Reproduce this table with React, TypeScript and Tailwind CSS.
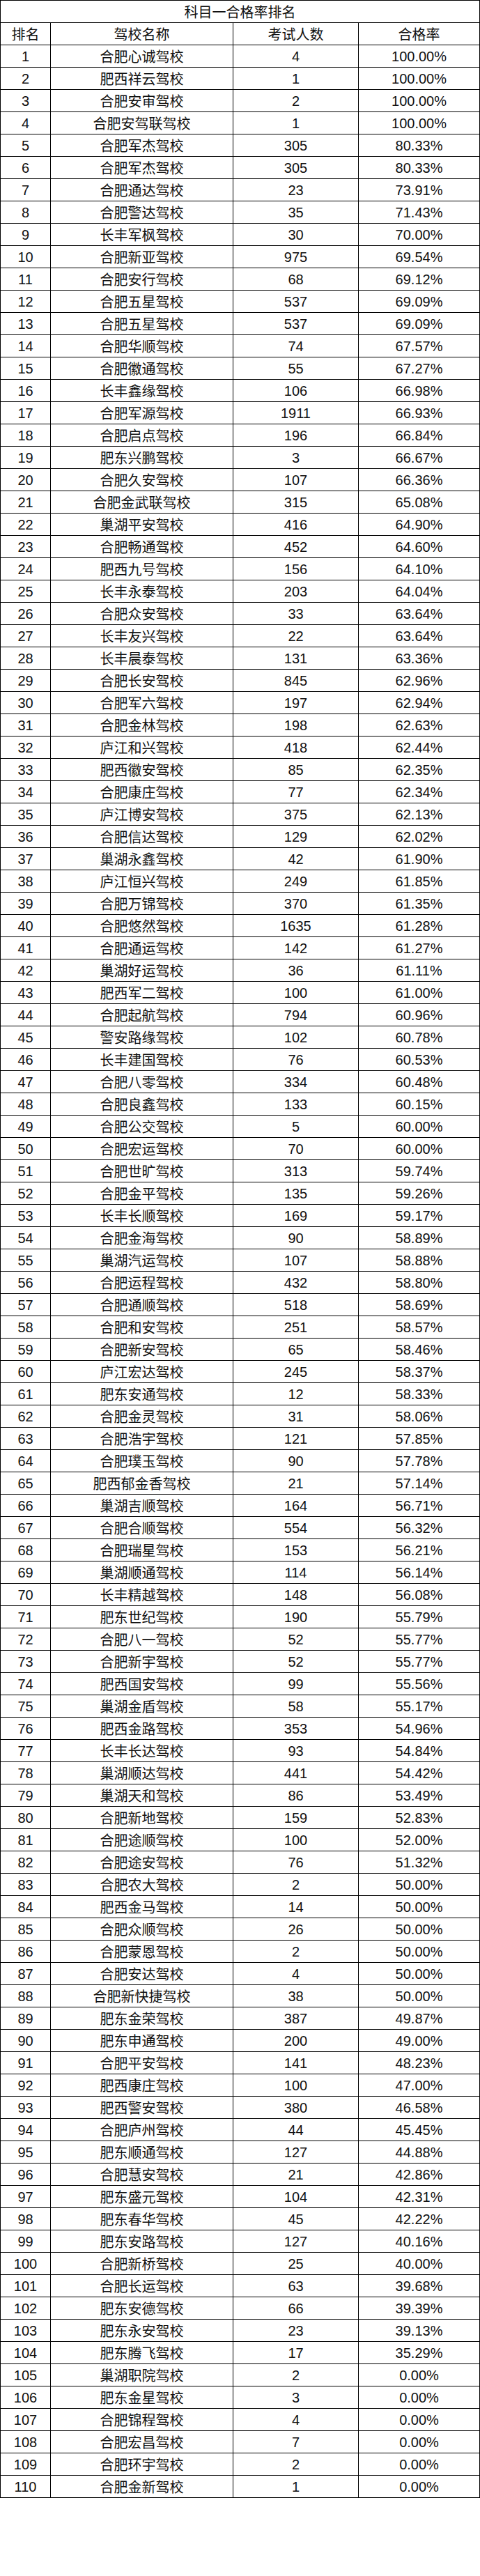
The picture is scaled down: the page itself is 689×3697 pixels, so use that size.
const raw = `合肥心诚驾校,4,100.00%
肥西祥云驾校,1,100.00%
合肥安审驾校,2,100.00%
合肥安驾联驾校,1,100.00%
合肥军杰驾校,305,80.33%
合肥军杰驾校,305,80.33%
合肥通达驾校,23,73.91%
合肥警达驾校,35,71.43%
长丰军枫驾校,30,70.00%
合肥新亚驾校,975,69.54%
合肥安行驾校,68,69.12%
合肥五星驾校,537,69.09%
合肥五星驾校,537,69.09%
合肥华顺驾校,74,67.57%
合肥徽通驾校,55,67.27%
长丰鑫缘驾校,106,66.98%
合肥军源驾校,1911,66.93%
合肥启点驾校,196,66.84%
肥东兴鹏驾校,3,66.67%
合肥久安驾校,107,66.36%
合肥金武联驾校,315,65.08%
巢湖平安驾校,416,64.90%
合肥畅通驾校,452,64.60%
肥西九号驾校,156,64.10%
长丰永泰驾校,203,64.04%
合肥众安驾校,33,63.64%
长丰友兴驾校,22,63.64%
长丰晨泰驾校,131,63.36%
合肥长安驾校,845,62.96%
合肥军六驾校,197,62.94%
合肥金林驾校,198,62.63%
庐江和兴驾校,418,62.44%
肥西徽安驾校,85,62.35%
合肥康庄驾校,77,62.34%
庐江博安驾校,375,62.13%
合肥信达驾校,129,62.02%
巢湖永鑫驾校,42,61.90%
庐江恒兴驾校,249,61.85%
合肥万锦驾校,370,61.35%
合肥悠然驾校,1635,61.28%
合肥通运驾校,142,61.27%
巢湖好运驾校,36,61.11%
肥西军二驾校,100,61.00%
合肥起航驾校,794,60.96%
警安路缘驾校,102,60.78%
长丰建国驾校,76,60.53%
合肥八零驾校,334,60.48%
合肥良鑫驾校,133,60.15%
合肥公交驾校,5,60.00%
合肥宏运驾校,70,60.00%
合肥世旷驾校,313,59.74%
合肥金平驾校,135,59.26%
长丰长顺驾校,169,59.17%
合肥金海驾校,90,58.89%
巢湖汽运驾校,107,58.88%
合肥运程驾校,432,58.80%
合肥通顺驾校,518,58.69%
合肥和安驾校,251,58.57%
合肥新安驾校,65,58.46%
庐江宏达驾校,245,58.37%
肥东安通驾校,12,58.33%
合肥金灵驾校,31,58.06%
合肥浩宇驾校,121,57.85%
合肥璞玉驾校,90,57.78%
肥西郁金香驾校,21,57.14%
巢湖吉顺驾校,164,56.71%
合肥合顺驾校,554,56.32%
合肥瑞星驾校,153,56.21%
巢湖顺通驾校,114,56.14%
长丰精越驾校,148,56.08%
肥东世纪驾校,190,55.79%
合肥八一驾校,52,55.77%
合肥新宇驾校,52,55.77%
肥西国安驾校,99,55.56%
巢湖金盾驾校,58,55.17%
肥西金路驾校,353,54.96%
长丰长达驾校,93,54.84%
巢湖顺达驾校,441,54.42%
巢湖天和驾校,86,53.49%
合肥新地驾校,159,52.83%
合肥途顺驾校,100,52.00%
合肥途安驾校,76,51.32%
合肥农大驾校,2,50.00%
肥西金马驾校,14,50.00%
合肥众顺驾校,26,50.00%
合肥蒙恩驾校,2,50.00%
合肥安达驾校,4,50.00%
合肥新快捷驾校,38,50.00%
肥东金荣驾校,387,49.87%
肥东申通驾校,200,49.00%
合肥平安驾校,141,48.23%
肥西康庄驾校,100,47.00%
肥西警安驾校,380,46.58%
合肥庐州驾校,44,45.45%
肥东顺通驾校,127,44.88%
合肥慧安驾校,21,42.86%
肥东盛元驾校,104,42.31%
肥东春华驾校,45,42.22%
肥东安路驾校,127,40.16%
合肥新桥驾校,25,40.00%
合肥长运驾校,63,39.68%
肥东安德驾校,66,39.39%
肥东永安驾校,23,39.13%
肥东腾飞驾校,17,35.29%
巢湖职院驾校,2,0.00%
肥东金星驾校,3,0.00%
合肥锦程驾校,4,0.00%
合肥宏昌驾校,7,0.00%
合肥环宇驾校,2,0.00%
合肥金新驾校,1,0.00%`;

const rows = raw.split("\n").map((line, i) => {
  const [name, count, rate] = line.split(",");
  return { rank: i + 1, name, count, rate };
});

const cjk = "font-['Noto_Sans_CJK_SC',sans-serif]";
const num = "font-['Liberation_Sans_Narrow','Liberation_Sans',sans-serif]";
const cell = "flex h-[32px] items-center justify-center border-r border-b border-black text-[20px] text-[#111]";

export default function App() {
  return (
    <div className="w-[689px] bg-white">
      <div className="border-l border-t border-black">
        {/* Title */}
        <div className={`${cell} ${cjk}`}>科目一合格率排名</div>

        <div className="grid grid-cols-[72px_262px_180px_174px]">
          {/* Header */}
          <div className={`${cell} ${cjk}`}>排名</div>
          <div className={`${cell} ${cjk}`}>驾校名称</div>
          <div className={`${cell} ${cjk}`}>考试人数</div>
          <div className={`${cell} ${cjk}`}>合格率</div>

          {rows.map((r) => (
            <div key={r.rank} className="contents">
              <div className={`${cell} ${num}`}>{r.rank}</div>
              <div className={`${cell} ${cjk}`}>{r.name}</div>
              <div className={`${cell} ${num}`}>{r.count}</div>
              <div className={`${cell} ${num}`}>{r.rate}</div>
            </div>
          ))}
        </div>
      </div>
    </div>
  );
}
